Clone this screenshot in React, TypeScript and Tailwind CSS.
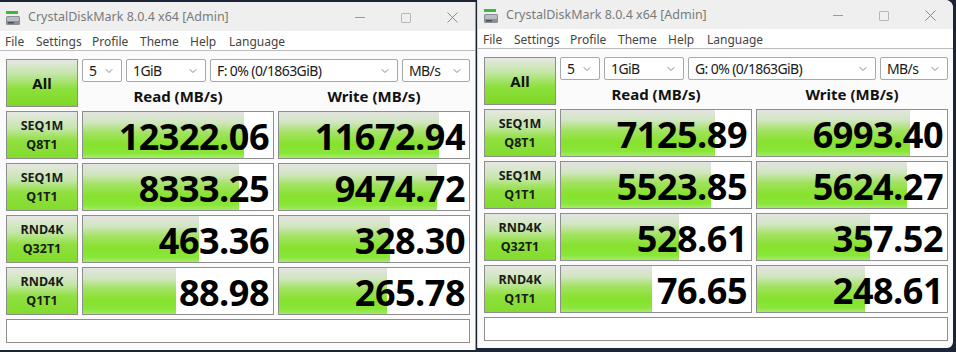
import { ChevronDown } from "lucide-react";

type Win = {
  drive: string;
  rows: { l1: string; l2: string; read: string; write: string }[];
};

const left: Win = {
  drive: "F: 0% (0/1863GiB)",
  rows: [
    { l1: "SEQ1M", l2: "Q8T1", read: "12322.06", write: "11672.94" },
    { l1: "SEQ1M", l2: "Q1T1", read: "8333.25", write: "9474.72" },
    { l1: "RND4K", l2: "Q32T1", read: "463.36", write: "328.30" },
    { l1: "RND4K", l2: "Q1T1", read: "88.98", write: "265.78" },
  ],
};

const right: Win = {
  drive: "G: 0% (0/1863GiB)",
  rows: [
    { l1: "SEQ1M", l2: "Q8T1", read: "7125.89", write: "6993.40" },
    { l1: "SEQ1M", l2: "Q1T1", read: "5523.85", write: "5624.27" },
    { l1: "RND4K", l2: "Q32T1", read: "528.61", write: "357.52" },
    { l1: "RND4K", l2: "Q1T1", read: "76.65", write: "248.61" },
  ],
};

// CDM draws the bar on a log scale: 0.1 MB/s .. 100000 MB/s
const pct = (v: string) => Math.min(100, ((Math.log10(parseFloat(v)) + 1) / 6) * 100);

function DriveIcon() {
  return (
    <svg width="16" height="16" viewBox="0 0 16 16">
      <rect x="1" y="1" width="12" height="3" fill="#3cb83c" />
      <rect x="1" y="6" width="14" height="9" rx="1.5" fill="#8a8f96" />
      <rect x="2" y="7" width="12" height="4" rx="1" fill="#b9bec4" />
      <rect x="3" y="12" width="6" height="1.5" fill="#4a4f55" />
    </svg>
  );
}

function Select({ w, text }: { w: string; text: string }) {
  return (
    <div
      className={`${w} h-[23px] flex items-center justify-between pl-[6px] pr-[6px] border border-[#a8a8a8] rounded-[2px] bg-white text-[14px] tracking-[-0.6px] text-[#1a1a1a]`}
    >
      <span>{text}</span>
      <ChevronDown size={12} strokeWidth={1.4} color="#555" />
    </div>
  );
}

function Score({ v }: { v: string }) {
  return (
    <div className="relative h-[48px] border border-[#8e8e8e] bg-white overflow-hidden">
      <div
        className="absolute left-0 top-0 bottom-0 bg-[linear-gradient(to_bottom,#e4e4e2_0%,#d2e6c2_22%,#a2e262_45%,#86e22c_70%,#8ae63a_90%,#a4ec6a_100%)]"
        style={{ width: `${pct(v)}%` }}
      />
      <div className="relative h-full flex items-center justify-end pr-[4px] pt-[3px] font-['Open_Sans',sans-serif] font-bold text-[36px] tracking-[-0.5px] text-black leading-none">
        {v}
      </div>
    </div>
  );
}

const menu: [string, string][] = [
  ["File", "w-[31px]"],
  ["Settings", "w-[56px]"],
  ["Profile", "w-[48px]"],
  ["Theme", "w-[50px]"],
  ["Help", "w-[39px]"],
  ["Language", "w-[60px]"],
];

function Window({ d, extra }: { d: Win; extra: string }) {
  return (
    <div className={`w-[476px] h-[348px] bg-[#fbfbfb] flex flex-col font-['Noto_Sans',sans-serif] ${extra}`}>
      <div className="h-[29px] bg-[#efefef] flex items-center pl-[5px] pt-[2px]">
        <DriveIcon />
        <span className="ml-[7px] text-[12.5px] text-[#7a7a7a]">CrystalDiskMark 8.0.4 x64 [Admin]</span>
        <div className="ml-auto flex items-center">
          <div className="w-[46px] flex justify-center">
            <div className="w-[10px] h-px bg-[#9a9a9a]" />
          </div>
          <div className="w-[46px] flex justify-center">
            <div className="w-[10px] h-[10px] border border-[#b8b8b8] rounded-[1px]" />
          </div>
          <div className="w-[46px] flex justify-center">
            <svg width="11" height="11" viewBox="0 0 11 11" stroke="#8a8a8a" strokeWidth="1">
              <path d="M0.5 0.5 L10.5 10.5 M10.5 0.5 L0.5 10.5" />
            </svg>
          </div>
        </div>
      </div>
      <div className="h-[20px] bg-white flex items-center pl-[5px] pt-[3px] text-[12px] text-[#444] border-b border-[#bdbdbd]">
        {menu.map(([t, w]) => (
          <span key={t} className={w}>
            {t}
          </span>
        ))}
      </div>
      <div className="pt-[8px] pl-[6px] pr-[6px]">
        <div className="grid grid-cols-[72px_192px_192px] gap-x-[4px] gap-y-[4px]">
          <div className="h-[48px] flex items-center justify-center border border-[#8e8e8e] bg-[linear-gradient(to_bottom,#e6e8e4_0%,#c4e6a8_30%,#8ee03e_62%,#7ed826_100%)] font-bold text-[15px] text-[#111]">
            All
          </div>
          <div className="col-span-2 h-[48px] flex flex-col">
            <div className="flex gap-[4px]">
              <Select w="w-[40px]" text="5" />
              <Select w="w-[80px]" text="1GiB" />
              <Select w="w-[188px]" text={d.drive} />
              <Select w="w-[68px]" text="MB/s" />
            </div>
            <div className="h-[25px] flex items-center pt-[4px] font-bold text-[15px] leading-none text-[#111]">
              <div className="w-[192px] text-center">Read (MB/s)</div>
              <div className="w-[192px] ml-[4px] text-center">Write (MB/s)</div>
            </div>
          </div>
          {d.rows.map((r, i) => (
            <div key={i} className="contents">
              <div className="h-[48px] flex flex-col items-center justify-center border border-[#8e8e8e] bg-[linear-gradient(to_bottom,#e6e8e4_0%,#c6e6ac_35%,#90e040_62%,#82dc2c_100%)] font-bold text-[12.5px] leading-[19px] text-[#1a1a1a]">
                <span>{r.l1}</span>
                <span>{r.l2}</span>
              </div>
              <Score v={r.read} />
              <Score v={r.write} />
            </div>
          ))}
          <div className="col-span-3 h-[24px] border border-[#8e8e8e] bg-white" />
        </div>
      </div>
    </div>
  );
}

export default function App() {
  return (
    <div className="w-[956px] h-[352px] bg-[#1c2536] flex items-start overflow-hidden">
      <Window d={left} extra="mt-[2px] border-r border-[#9c9c9c]" />
      <Window d={right} extra="ml-[1px] border-l border-[#d4d4d4] rounded-tr-[8px] rounded-br-[6px] overflow-hidden" />
    </div>
  );
}
